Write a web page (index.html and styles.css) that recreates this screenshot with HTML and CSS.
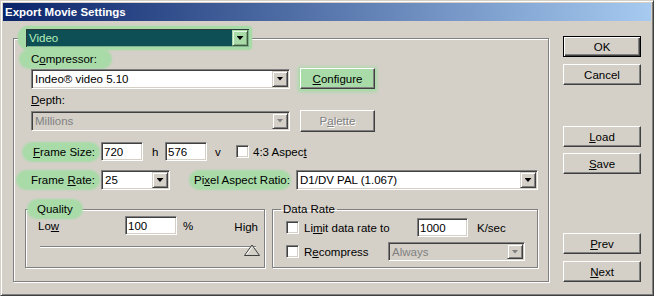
FILE: index.html
```html
<!DOCTYPE html>
<html lang="en">
<head>
    <meta charset="UTF-8">
    <title>Export Movie Settings</title>
    <link rel="stylesheet" href="styles.css">
</head>
<body>
    <div class="window">
        <div class="titlebar">Export Movie Settings</div>

        <div class="body">
            <fieldset class="main">
                <legend class="main-legend">
                    <span class="legend-blob">
                        <span class="combo video"><span class="val">Video</span><span class="arrow"></span></span>
                    </span>
                </legend>

                <div class="main-inner">
                    <div class="lbl"><span class="hl hl-comp">C<u>o</u>mpressor:</span></div>
                    <div class="row">
                        <div class="combo w-comp"><span class="val">Indeo® video 5.10</span><span class="arrow"></span></div>
                        <button class="btn btn-side green"><u>C</u>onfigure</button>
                    </div>

                    <div class="lbl lbl-depth"><u>D</u>epth:</div>
                    <div class="row row-depth">
                        <div class="combo w-comp disabled"><span class="val">Millions</span><span class="arrow"></span></div>
                        <button class="btn btn-side disabled">P<u>a</u>lette</button>
                    </div>

                    <div class="frow size-row">
                        <span class="flabel size-label"><span class="hl hl-size"><u>F</u>rame Size:</span></span>
                        <input class="field w-dim" type="text" value="720">
                        <span class="unit unit-h">h</span>
                        <input class="field w-dim" type="text" value="576">
                        <span class="unit unit-v">v</span>
                        <span class="check"></span>
                        <span class="check-text">4:3 Aspec<u>t</u></span>
                    </div>

                    <div class="frow rate-row">
                        <span class="flabel rate-label"><span class="hl hl-rate">Frame <u>R</u>ate:</span></span>
                        <div class="combo w-rate"><span class="val">25</span><span class="arrow"></span></div>
                        <span class="par-label"><span class="hl hl-par">Pi<u>x</u>el Aspect Ratio:</span></span>
                        <div class="combo w-par"><span class="val">D1/DV PAL (1.067)</span><span class="arrow"></span></div>
                    </div>

                    <div class="groups">
                        <fieldset class="sub">
                            <legend class="quality-legend"><span class="hl hl-quality">Quality</span></legend>
                            <div class="qrow">
                                <span class="low">Lo<u>w</u></span>
                                <input class="field w-quality" type="text" value="100">
                                <span class="pct">%</span>
                                <span class="high">High</span>
                            </div>
                            <div class="slider">
                                <svg class="thumb" width="16" height="12" viewBox="0 0 16 12">
                                    <polygon points="0.5,11.5 8,1 15.5,11.5" fill="#d4d0c8" stroke="#404040"/>
                                    <polyline points="2.5,10.5 8,3" fill="none" stroke="#fff"/>
                                </svg>
                            </div>
                        </fieldset>

                        <fieldset class="sub">
                            <legend class="rate-legend">Data Rate</legend>
                            <div class="drow">
                                <span class="check"></span>
                                <span class="dlabel limit-label">Li<u>m</u>it data rate to</span>
                                <input class="field w-limit" type="text" value="1000">
                                <span class="ksec">K/sec</span>
                            </div>
                            <div class="drow drow-2">
                                <span class="check"></span>
                                <span class="dlabel recomp-label">R<u>e</u>compress</span>
                                <div class="combo w-always disabled"><span class="val">Always</span><span class="arrow"></span></div>
                            </div>
                        </fieldset>
                    </div>
                </div>
            </fieldset>

            <div class="side">
                <div class="btn-group">
                    <button class="btn default">OK</button>
                    <button class="btn">Cancel</button>
                </div>
                <div class="btn-group load-group">
                    <button class="btn"><u>L</u>oad</button>
                    <button class="btn"><u>S</u>ave</button>
                </div>
                <div class="btn-group nav-group">
                    <button class="btn"><u>P</u>rev</button>
                    <button class="btn"><u>N</u>ext</button>
                </div>
            </div>
        </div>
    </div>
</body>
</html>
```

FILE: styles.css
```css
body {
    margin: 0;
    background: #d4d0c8;
}
.window {
    width: 654px;
    height: 296px;
    box-sizing: border-box;
    border: 1px solid;
    border-color: #d4d0c8 #404040 #404040 #d4d0c8;
    box-shadow: inset 1px 1px #fff, inset -1px -1px #808080;
    padding: 2px;
    background: #d4d0c8;
    display: flex;
    flex-direction: column;
    font: 11.5px "Liberation Sans", Arial, sans-serif;
    color: #000;
}
.titlebar {
    height: 18px;
    line-height: 18px;
    padding-left: 2px;
    background: linear-gradient(to right, #0a246a, #a6caf0);
    color: #fff;
    font-weight: bold;
}
.body {
    flex: 1;
    display: flex;
    padding: 5px 10px 11px 10px;
    min-height: 0;
}

/* etched group boxes */
.main, .sub {
    margin: 0;
    padding: 0;
    border: 1px solid #808080;
    box-shadow: inset 1px 1px #fff, 1px 1px #fff;
    box-sizing: border-box;
    min-width: 0;
}
.main {
    width: 537px;
}
.main-legend {
    padding: 0;
    margin-left: 4px;
}
.legend-blob {
    display: block;
    padding: 2px 2px 2px 7px;
    background: #a8dba8;
    border-radius: 11px 4px 4px 11px;
    box-shadow: 0 0 2px #a8dba8;
}
.main-inner {
    padding: 0 10px 0 11px;
}

/* green highlight marks */
.hl {
    background: #a8dba8;
    border-radius: 10px;
    box-shadow: 0 0 2px 1px #a8dba8;
    padding: 3px 10px;
    margin: 0 -10px;
}
.hl-comp { padding: 3px 14px 3px 11px; margin: 0 -14px 0 -11px; }
.hl-size { padding: 3px 4px 3px 10px; margin: 0 -4px 0 -10px; }
.hl-rate { padding: 3px 4px 3px 14px; margin: 0 -4px 0 -14px; }
.hl-par { padding: 3px 0 3px 4px; margin: 0 0 0 -4px; }
.hl-quality { padding: 3px 9px; margin: 0 -9px; }

.lbl {
    height: 14px;
    line-height: 14px;
    margin-top: 2px;
    padding-left: 6px;
}
.lbl-depth {
    margin-top: 4px;
}
.row {
    display: flex;
    align-items: center;
    height: 21px;
    margin-top: 2px;
    margin-left: 6px;
}
.row-depth {
    margin-top: 3px;
}

/* combo boxes */
.combo {
    box-sizing: border-box;
    height: 20px;
    display: flex;
    align-items: center;
    background: #fff;
    border: 1px solid;
    border-color: #808080 #fff #fff #808080;
    box-shadow: inset 1px 1px #404040, inset -1px -1px #d4d0c8;
    padding: 1px;
}
.combo .val {
    flex: 1;
    padding-left: 2px;
    white-space: nowrap;
    overflow: hidden;
}
.combo .arrow {
    width: 16px;
    height: 16px;
    box-sizing: border-box;
    background: #d4d0c8;
    border: 1px solid;
    border-color: #d4d0c8 #404040 #404040 #d4d0c8;
    box-shadow: inset 1px 1px #fff, inset -1px -1px #808080;
    display: flex;
    align-items: center;
    justify-content: center;
}
.combo .arrow::after {
    content: "";
    width: 7px;
    height: 4px;
    background: #000;
    clip-path: polygon(0 0, 100% 0, 50% 100%);
}
.combo.disabled {
    background: #d4d0c8;
    color: #808080;
}
.combo.disabled .arrow::after {
    background: #808080;
}
.combo.video {
    width: 225px;
    background: #0d4f55;
    color: #b8f0b8;
    border-color: #a8dba8;
    box-shadow: inset 1px 1px #2b3b3b, inset -1px -1px #7fb08f;
}
.combo.video .arrow {
    background: #a8dba8;
    border-color: #a8dba8 #3d5a3d #3d5a3d #a8dba8;
    box-shadow: inset 1px 1px #e4f6e4, inset -1px -1px #7fa87f;
}
.w-comp { width: 259px; }
.w-rate { width: 69px; }
.w-par { flex: 1; }
.w-always { width: 137px; height: 19px; }
.w-always .arrow { height: 15px; }

/* text fields */
.field {
    box-sizing: border-box;
    height: 19px;
    border: 1px solid;
    border-color: #808080 #fff #fff #808080;
    box-shadow: inset 1px 1px #404040, inset -1px -1px #d4d0c8;
    background: #fff;
    font: inherit;
    color: #000;
    padding: 0 2px;
    margin: 0;
    outline: none;
}
.w-dim { width: 42px; }
.w-quality { width: 52px; }
.w-limit { width: 51px; }

.check {
    width: 13px;
    height: 13px;
    box-sizing: border-box;
    flex: none;
    background: #fff;
    border: 1px solid;
    border-color: #808080 #fff #fff #808080;
    box-shadow: inset 1px 1px #404040, inset -1px -1px #d4d0c8;
}

/* buttons */
.btn {
    box-sizing: border-box;
    height: 21px;
    padding: 0;
    font: inherit;
    color: #000;
    background: #d4d0c8;
    border: 1px solid;
    border-color: #fff #404040 #404040 #fff;
    box-shadow: inset -1px -1px #808080;
}
.btn.default {
    border-color: #000;
    box-shadow: inset 1px 1px #fff, inset -1px -1px #404040, inset -2px -2px #808080;
}
.btn.disabled {
    color: #808080;
    text-shadow: 1px 1px #fff;
}
.btn-side {
    width: 75px;
    margin-left: 10px;
}
.row-depth .btn-side {
    height: 22px;
}
.btn.green {
    background: #a8dba8;
    box-shadow: inset -1px -1px #808080, 0 1px 3px 2px #a8dba8;
}

/* frame rows */
.frow {
    display: flex;
    align-items: center;
}
.size-row {
    height: 19px;
    margin-top: 11px;
    padding-left: 8px;
}
.rate-row {
    height: 20px;
    margin-top: 9px;
    padding-left: 6px;
}
.size-label { width: 68px; }
.rate-label { width: 70px; }
.unit-h { width: 13px; margin-left: 9px; }
.unit-v { width: 21px; margin-left: 8px; }
.check-text { margin-left: 4px; }
.par-label { width: 102px; margin-left: 24px; }

/* bottom groups */
.groups {
    display: grid;
    grid-template-columns: 240px 1fr;
    gap: 7px;
    margin-top: 12px;
}
.sub {
    height: 66px;
}
.sub legend {
    padding: 0 2px;
    line-height: 14px;
}
.quality-legend { margin-left: 9px; }
.rate-legend { margin-left: 8px; }

.qrow {
    display: flex;
    align-items: center;
    height: 19px;
    padding: 0 6px 0 12px;
}
.low { width: 87px; }
.pct { margin-left: 6px; }
.high { margin-left: auto; padding-top: 2px; }

.slider {
    position: relative;
    height: 12px;
    margin: 9px 8px 0 14px;
}
.slider::before {
    content: "";
    position: absolute;
    left: 0;
    right: 0;
    top: 2px;
    border-top: 1px solid #808080;
    border-bottom: 1px solid #fff;
}
.thumb {
    position: absolute;
    right: -4px;
    top: 0;
}

.drow {
    display: flex;
    align-items: center;
    height: 19px;
    margin-top: 2px;
    padding-left: 13px;
}
.drow-2 { margin-top: 5px; }
.dlabel { margin-left: 5px; }
.limit-label { width: 113px; }
.recomp-label { width: 84px; }
.ksec { margin-left: 9px; }

/* right column */
.side {
    width: 78px;
    margin-left: 14px;
    display: flex;
    flex-direction: column;
}
.btn-group {
    display: flex;
    flex-direction: column;
    gap: 7px;
}
.side .btn {
    width: 78px;
}
.btn-group:first-child { margin-top: 10px; }
.load-group { margin-top: 41px; gap: 6px; }
.nav-group { margin-top: auto; }
```
